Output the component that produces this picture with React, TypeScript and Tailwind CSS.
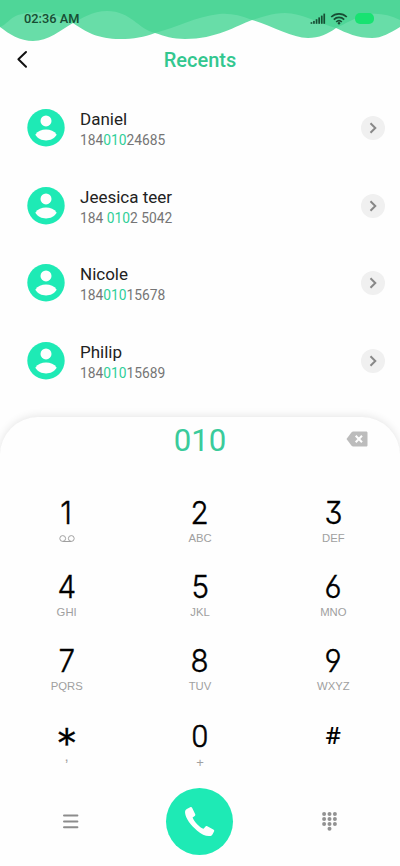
const contacts = [
  { name: "Daniel", before: "184", match: "010", after: "24685" },
  { name: "Jeesica teer", before: "184 ", match: "010", after: "2 5042" },
  { name: "Nicole", before: "184", match: "010", after: "15678" },
  { name: "Philip", before: "184", match: "010", after: "15689" }
]

const keys = [
  { digit: "1", label: "voicemail" },
  { digit: "2", label: "ABC" },
  { digit: "3", label: "DEF" },
  { digit: "4", label: "GHI" },
  { digit: "5", label: "JKL" },
  { digit: "6", label: "MNO" },
  { digit: "7", label: "PQRS" },
  { digit: "8", label: "TUV" },
  { digit: "9", label: "WXYZ" },
  { digit: "*", label: "," },
  { digit: "0", label: "+" },
  { digit: "#", label: "" }
]

const padDots = [
  [2.1, 2.1], [7.5, 2.1], [12.9, 2.1],
  [2.1, 7], [7.5, 7], [12.9, 7],
  [2.1, 11.9], [7.5, 11.9], [12.9, 11.9],
  [7.5, 16.8]
]

function Waves() {
  return (
    <svg className="absolute inset-x-0 top-0 h-[44px] w-full" viewBox="0 0 400 44" fill="none">
      <path
        d="M0 0H400V27C390 33 382 38 372 38C358 38 346 33 336 28C328 34 319 38 308 38C292 38 272 26 252 20C236 26 216 39 185 39C173 39 164 36 155 33C144 37 134 39 120 39C98 39 86 32 73 23C61 30 48 41 33 41C20 41 9 34 0 27Z"
        fill="#68dda8"
      />
      <path
        d="M0 0H400V20C390 15 380 13 370 14C354 17 346 24 336 28C318 23 302 13 285 13C270 13 261 18 252 20C240 15 230 13 219 14C194 17 178 27 155 33C138 29 131 11 107 11C92 11 83 18 73 23C64 19 60 16 50 14C38 11 27 12 18 15C10 18 6 25 0 27Z"
        fill="#4fd698"
      />
    </svg>
  )
}

function StatusIcons() {
  return (
    <div className="flex items-center">
      <svg className="h-[12px] w-[16px]" viewBox="0 0 16 12" fill="#174d33">
        <rect x="0.6" y="9.2" width="1.7" height="1.6" />
        <rect x="3.1" y="7.9" width="1.7" height="2.9" />
        <rect x="5.7" y="6.2" width="1.7" height="4.6" />
        <rect x="8.3" y="4.4" width="1.7" height="6.4" />
        <rect x="10.9" y="2.6" width="1.7" height="8.2" />
        <rect x="13.4" y="0.6" width="1.7" height="10.2" />
      </svg>
      <svg
        className="ml-[4px] h-[13px] w-[18px]"
        viewBox="0 0 18 13"
        fill="none"
        stroke="#174d33"
        strokeWidth="1.7"
      >
        <path d="M1.2 5C5.6 0.7 12.4 0.7 16.8 5" />
        <path d="M3.8 7.6C6.8 4.7 11.2 4.7 14.2 7.6" />
        <path d="M6.2 10C7.9 8.4 10.1 8.4 11.8 10" />
        <circle cx="9" cy="11.2" r="1.2" fill="#174d33" stroke="none" />
      </svg>
      <div className="ml-[7px] h-[11px] w-[19px] rounded-[5px] bg-[#18e271]" />
    </div>
  )
}

function Avatar() {
  return (
    <svg className="ml-[3px] size-[38px]" viewBox="0 0 38 38">
      <circle cx="19" cy="18.7" r="18.7" fill="#1eeab5" />
      <circle cx="19" cy="11.9" r="5.5" fill="#fefefe" />
      <path d="M8.3 25.7C10.6 22.2 14.7 20.6 19 20.6C23.3 20.6 27.4 22.2 29.7 25.7C27.4 29.6 23.3 31.4 19 31.4C14.7 31.4 10.6 29.6 8.3 25.7Z" fill="#fefefe" />
    </svg>
  )
}

function KeyLabel({ label }: { label: string }) {
  if (label === "voicemail") {
    return (
      <svg className="h-[8px] w-[16px]" viewBox="0 0 16 8" fill="none" stroke="#a0a0a0" strokeWidth="1">
        <circle cx="3.7" cy="3.5" r="2.9" />
        <circle cx="12.3" cy="3.5" r="2.9" />
        <path d="M3.7 6.5H12.3" />
      </svg>
    )
  }
  if (label === ",") {
    return <span className="relative -top-[6px] text-[15px]">,</span>
  }
  if (label === "+") {
    return <span className="relative top-px text-[13px]">+</span>
  }
  return <span>{label}</span>
}

function Digit({ digit }: { digit: string }) {
  if (digit === "*") {
    return <span className="relative top-[9px] text-[43px] font-light [-webkit-text-stroke:0.3px]">*</span>
  }
  if (digit === "#") {
    return <span className="relative inline-block font-['Noto_Sans'] text-[24px] font-medium">#</span>
  }
  if (digit === "0") {
    return (
      <span className="relative top-px inline-block scale-x-[0.94] font-['Roboto'] text-[32px] font-light [-webkit-text-stroke:0.6px]">
        0
      </span>
    )
  }
  return (
    <span className="inline-block scale-x-[0.94] font-light [-webkit-text-stroke:0.4px] [font-feature-settings:'cv03','cv04','cv09']">
      {digit}
    </span>
  )
}

export default function App() {
  return (
    <div className="flex h-[866px] w-[400px] flex-col overflow-hidden bg-[#fefefe] font-['Roboto',sans-serif]">
      <header className="relative h-[89px] shrink-0">
        <Waves />
        <div className="relative flex h-[37px] items-center justify-between pl-[24px] pr-[26px]">
          <span className="pt-px text-[12.8px] font-medium text-[#174d33]">02:36 AM</span>
          <StatusIcons />
        </div>
        <div className="relative flex h-[46px] items-center justify-center">
          <svg className="absolute left-[16px] top-[13px] h-[19px] w-[12px]" viewBox="0 0 12 19" fill="none">
            <path d="M10 2L2.4 9.3L10 16.8" stroke="#111111" strokeWidth="2" strokeLinecap="round" strokeLinejoin="round" />
          </svg>
          <h1 className="text-[20px] font-medium text-[#33c78f]">Recents</h1>
        </div>
      </header>

      <ul className="h-[328px] shrink-0">
        {contacts.map(contact => (
          <li key={contact.name} className="flex h-[77.7px] items-center pl-[24px] pr-[15px]">
            <Avatar />
            <div className="ml-[15px] flex-1 pt-[4px]">
              <p className="text-[17px] leading-[21px] text-[#222222]">{contact.name}</p>
              <p className="text-[13.8px] leading-[21px] text-[#757575]">
                {contact.before}
                <span className="text-[#2fcf98]">{contact.match}</span>
                {contact.after}
              </p>
            </div>
            <div className="flex size-[24px] items-center justify-center rounded-full bg-[#f0f0f0]">
              <svg className="h-[12px] w-[8px]" viewBox="0 0 8 12" fill="none">
                <path d="M1.5 1.2L6.3 6L1.5 10.8" stroke="#888888" strokeWidth="2" />
              </svg>
            </div>
          </li>
        ))}
      </ul>

      <section className="relative flex-1 rounded-t-[38px] bg-[#fefefe] shadow-[0_-1px_8px_rgba(0,0,0,0.1)]">
        <div className="relative flex h-[46px] items-center justify-center">
          <span className="pt-px text-[31.2px] leading-none text-[#3acb9b]">010</span>
          <svg className="absolute right-[32.5px] top-[14px] h-[16px] w-[22px]" viewBox="0 0 22 16" fill="none">
            <path d="M7.2 0.5H20C21 0.5 21.5 1 21.5 2V14C21.5 15 21 15.5 20 15.5H7.2C6.5 15.5 6 15.2 5.6 14.7L0.5 8L5.6 1.3C6 0.8 6.5 0.5 7.2 0.5Z" fill="#bcbcbc" />
            <path d="M9.7 4.7L16 11.3M16 4.7L9.7 11.3" stroke="#fefefe" strokeWidth="2" />
          </svg>
        </div>

        <div className="mt-[30px] grid grid-cols-3 auto-rows-[74.2px]">
          {keys.map(key => (
            <div key={key.digit} className="flex flex-col items-center">
              <div className="flex h-[39px] items-center font-['Inter'] text-[31.5px] leading-none text-black">
                <Digit digit={key.digit} />
              </div>
              <div className="flex h-[13px] items-center font-['Liberation_Sans'] text-[11.3px] leading-none text-[#a0a0a0]">
                <KeyLabel label={key.label} />
              </div>
            </div>
          ))}
        </div>

        <div className="-mt-[2px] grid grid-cols-3 items-center">
          <div className="pl-[62px]">
            <svg className="h-[15px] w-[17px]" viewBox="0 0 17 15" stroke="#8c8c8c" strokeWidth="2" strokeLinecap="round">
              <path d="M2 1.5H15.4M2 7.5H15.4M2 13.3H15.4" />
            </svg>
          </div>
          <div className="flex justify-center">
            <div className="flex size-[67px] items-center justify-center rounded-full bg-[#1eeab5]">
              <svg className="size-[31px]" viewBox="0 0 31 31" fill="#fefefe">
                <path d="M2.8 3L6.2 1.3C7.1 0.9 7.7 1.1 8.2 1.9L11.1 8C11.5 8.9 11.4 9.3 10.7 10L8.6 11.4C9.8 15.2 15.8 21.6 19.6 22.8L21.3 20.7C21.9 20 22.5 19.9 23.3 20.3L29.3 23.4C30.3 23.9 30.5 24.6 30 25.5L28.6 28.3C27.8 29.7 26.8 30.2 25 30.1C21 30 17.3 28.2 13.2 24.7C7 19.3 1.5 12.5 1.1 7C0.9 5 1.4 3.7 2.8 3Z" />
              </svg>
            </div>
          </div>
          <div className="pl-[55px]">
            <svg className="h-[19px] w-[15px]" viewBox="0 0 15 19" fill="#929292">
              {padDots.map(([x, y]) => (
                <circle key={`${x}-${y}`} cx={x} cy={y} r="2" />
              ))}
            </svg>
          </div>
        </div>
      </section>
    </div>
  )
}
